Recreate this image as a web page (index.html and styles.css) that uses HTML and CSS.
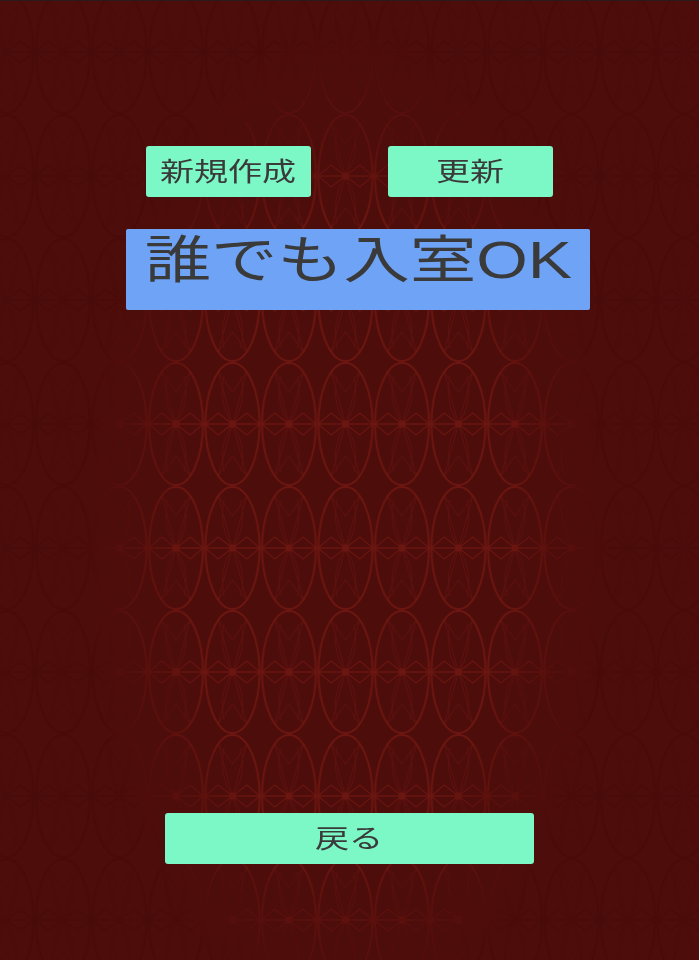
FILE: index.html
```html
<!DOCTYPE html>
<html lang="ja">
<head>
  <meta charset="UTF-8" />
  <title>ルーム一覧</title>
  <link rel="stylesheet" href="styles.css">
</head>
<body>
  <!-- background weave, sits behind everything -->
  <svg class="backdrop" width="699" height="960" viewBox="0 0 699 960" aria-hidden="true">
    <defs>
      <g id="motif" fill="none">
        <ellipse cx="28.25" cy="62" rx="27" ry="61" stroke-width="2.2" />
        <path d="M0 62H56.5" stroke-width="1.6" />
        <path d="M1 62L14 51L28.25 62L42.5 51L55.5 62L42.5 73L28.25 62L14 73Z" stroke-width="1.2" />
        <g stroke-width="1" opacity="0.6">
          <path d="M28.25 62L14 10M28.25 62L42.5 10M28.25 62L14 114M28.25 62L42.5 114" />
          <path d="M28.25 62Q14 40 20 14M28.25 62Q42.5 40 36.5 14M28.25 62Q14 84 20 110M28.25 62Q42.5 84 36.5 110" />
          <path d="M14 10L28.25 30L42.5 10M14 114L28.25 94L42.5 114" />
        </g>
      </g>
      <pattern id="weaveDark" width="56.5" height="124" patternUnits="userSpaceOnUse" patternTransform="translate(147.75 362)">
        <use href="#motif" stroke="#3f0806" />
      </pattern>
      <pattern id="weaveRed" width="56.5" height="124" patternUnits="userSpaceOnUse" patternTransform="translate(147.75 362)">
        <use href="#motif" stroke="#6b1611" />
        <circle cx="28.25" cy="62" r="3.5" fill="#6b1611" />
      </pattern>
      <radialGradient id="fade" gradientUnits="userSpaceOnUse" cx="0" cy="0" r="1" gradientTransform="translate(346 530) scale(265 510)">
        <stop offset="0" stop-color="#fff" />
        <stop offset="0.62" stop-color="#fff" />
        <stop offset="1" stop-color="#000" />
      </radialGradient>
      <mask id="fadeMask">
        <rect width="699" height="960" fill="url(#fade)" />
      </mask>
    </defs>
    <rect width="699" height="960" fill="url(#weaveDark)" opacity="0.3" />
    <rect width="699" height="960" fill="url(#weaveRed)" mask="url(#fadeMask)" />
  </svg>

  <main class="screen">
    <div class="top-buttons">
      <button class="btn"><span class="stretch">新規作成</span></button>
      <button class="btn"><span class="stretch">更新</span></button>
    </div>

    <div class="room-item"><span class="stretch">誰でも入室OK</span></div>

    <div class="bottom-bar">
      <button class="btn btn-back"><span class="stretch">戻る</span></button>
    </div>
  </main>
</body>
</html>
```

FILE: styles.css
```css
html, body {
  margin: 0;
  padding: 0;
}
body {
  width: 699px;
  height: 960px;
  overflow: hidden;
  background-color: #4d0d0b;
  font-family: "Liberation Sans", "Noto Sans CJK JP", sans-serif;
  color: #3a3a3a;
}
.backdrop {
  position: absolute;
  top: 0;
  left: 0;
  filter: blur(0.7px);
}
.screen {
  position: relative;
  box-sizing: border-box;
  height: 960px;
  padding-top: 146px;
  padding-bottom: 96px;
  display: flex;
  flex-direction: column;
  border-top: 1px solid #2a1a1c;
}
.top-buttons {
  display: flex;
  gap: 77px;
  margin-top: -1px;
  padding-left: 146px;
}
.btn {
  width: 165px;
  height: 51px;
  padding: 1px 0 0;
  border: none;
  border-radius: 3px;
  background-color: #7cf7c6;
  color: #3a3a3a;
  font-family: inherit;
  font-size: 26px;
  line-height: 1;
}
.stretch {
  display: inline-block;
  transform: scaleX(1.31);
  white-space: nowrap;
  filter: blur(0.4px);
}
.room-item {
  box-sizing: border-box;
  width: 464px;
  height: 81px;
  margin-top: 32px;
  margin-left: 126px;
  padding-top: 4px;
  border-radius: 2px;
  background-color: #6fa3f6;
  text-align: center;
  font-size: 51px;
  line-height: 56px;
}
.room-item .stretch {
  transform: scaleX(1.3);
}
.bottom-bar {
  margin-top: auto;
  padding-left: 165px;
}
.btn-back {
  width: 369px;
}
```
